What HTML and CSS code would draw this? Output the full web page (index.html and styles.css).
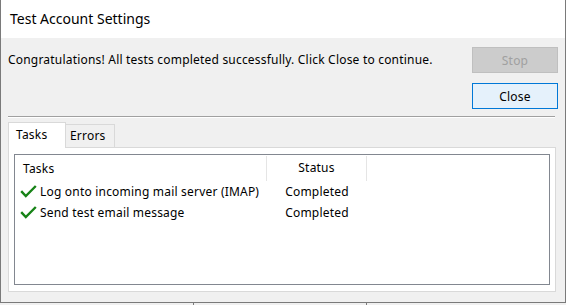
FILE: index.html
```html
<!DOCTYPE html>
<html lang="en">
<head>
  <meta charset="UTF-8">
  <title>Test Account Settings</title>
  <link rel="stylesheet" href="styles.css">
</head>
<body>
  <div class="window">
    <div class="titlebar">Test Account Settings</div>

    <div class="content">
      <div class="top">
        <div class="message">Congratulations! All tests completed successfully. Click Close to continue.</div>
        <button class="btn btn-disabled">Stop</button>
        <button class="btn btn-default">Close</button>
      </div>

      <div class="separator"></div>

      <div class="tabs">
        <div class="tab active">Tasks</div>
        <div class="tab">Errors</div>
      </div>

      <div class="panel">
        <div class="list">
          <div class="list-header">
            <div class="col col-task">Tasks</div>
            <div class="col col-status">Status</div>
          </div>
          <div class="row">
            <div class="col col-task">
              <svg class="check" width="17" height="13" viewBox="0 0 17 13">
                <path d="M1.2 6.2 L5.8 11 L15.8 1" fill="none" stroke="#178317" stroke-width="2.4"/>
              </svg>
              Log onto incoming mail server (IMAP)
            </div>
            <div class="col col-status">Completed</div>
          </div>
          <div class="row">
            <div class="col col-task">
              <svg class="check" width="17" height="13" viewBox="0 0 17 13">
                <path d="M1.2 6.2 L5.8 11 L15.8 1" fill="none" stroke="#178317" stroke-width="2.4"/>
              </svg>
              Send test email message
            </div>
            <div class="col col-status">Completed</div>
          </div>
        </div>
      </div>
    </div>
  </div>
  <div class="below">
    <div class="below-box"></div>
  </div>
</body>
</html>
```

FILE: styles.css
```css
body {
  margin: 0;
  background: #f0f0f0;
  font-family: 'Noto Sans', 'Open Sans', sans-serif;
  font-size: 12px;
  letter-spacing: 0.2px;
  color: #000;
}
.window {
  width: 566px;
  height: 303px;
  box-sizing: border-box;
  border: 1px solid #7a7a7a;
  border-top: none;
  display: flex;
  flex-direction: column;
  background: #f0f0f0;
}
.titlebar {
  height: 38px;
  line-height: 38px;
  background: #fff;
  padding-left: 9px;
  font-size: 14px;
  letter-spacing: 0;
}
.content {
  flex: 1;
  padding: 9px 7px 0 7px;
  display: flex;
  flex-direction: column;
}
.top {
  display: grid;
  grid-template-columns: 1fr 86px;
  grid-template-rows: 26px 26px;
  row-gap: 10px;
}
.message {
  line-height: 26px;
  white-space: nowrap;
}
.btn {
  grid-column: 2;
  height: 26px;
  font-family: inherit;
  font-size: 12px;
  letter-spacing: 0.2px;
  padding: 0;
  border: 1px solid #adadad;
  background: #e1e1e1;
}
.btn-disabled {
  background: #cccccc;
  border-color: #bfbfbf;
  color: #a0a0a0;
}
.btn-default {
  background: #e5f1fb;
  border-color: #0078d7;
  color: #000;
}
.separator {
  height: 1px;
  background: #a0a0a0;
  margin: 7px 3px 0 0;
  border-bottom: 1px solid #fff;
}
.tabs {
  display: flex;
  align-items: flex-end;
  margin-top: 4px;
  height: 25px;
}
.tab {
  height: 22px;
  line-height: 22px;
  padding: 0 8px 0 4px;
  border: 1px solid #d9d9d9;
  border-bottom: none;
  background: #f0f0f0;
  margin-left: -1px;
}
.tab:first-child {
  margin-left: 0;
}
.tab.active {
  width: 49px;
  padding: 0 0 0 7px;
  height: 25px;
  line-height: 24px;
  background: #fff;
  position: relative;
  z-index: 1;
  margin-bottom: -1px;
}
.panel {
  width: 548px;
  height: 145px;
  box-sizing: border-box;
  border: 1px solid #d9d9d9;
  background: #fff;
  padding: 6px 5px;
}
.list {
  height: 131px;
  box-sizing: border-box;
  border: 1px solid #828790;
  background: #fff;
}
.list-header {
  display: flex;
  height: 26px;
  line-height: 24px;
  padding-top: 1px;
  box-sizing: border-box;
}
.list-header .col {
  border-right: 1px solid #e5e5e5;
}
.list-header .col-task {
  padding-left: 8px;
}
.row {
  display: flex;
  height: 21px;
  line-height: 21px;
}
.col-task {
  width: 252px;
  box-sizing: border-box;
  padding-left: 5px;
  display: flex;
  align-items: center;
  white-space: nowrap;
}
.col-status {
  width: 100px;
  box-sizing: border-box;
  text-align: center;
}
.check {
  margin-right: 3px;
  flex: none;
}
.below {
  height: 2px;
  display: flex;
}
.below-box {
  margin-left: 193px;
  width: 174px;
  height: 2px;
  box-sizing: border-box;
  border-left: 1px solid #7a7a7a;
  border-right: 1px solid #7a7a7a;
}
```
